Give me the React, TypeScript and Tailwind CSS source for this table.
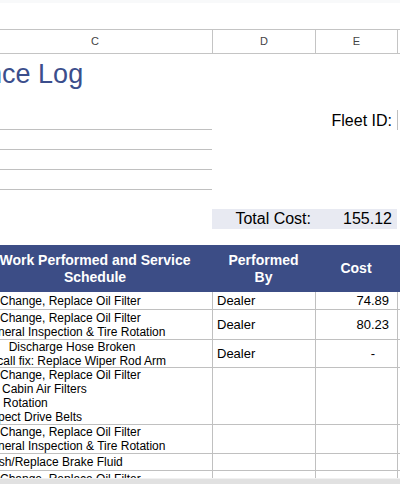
import React from "react";

interface LogLine {
  text: string;
  className?: string;
}

interface LogRow {
  height: string;
  lines: LogLine[];
  by: string;
  cost: string;
}

const oil: LogLine = { text: "Oil Change, Replace Oil Filter" };
const general: LogLine = { text: "General Inspection & Tire Rotation" };

const rows: LogRow[] = [
  { height: "h-[18px]", lines: [oil], by: "Dealer", cost: "74.89" },
  { height: "h-[30px]", lines: [oil, general], by: "Dealer", cost: "80.23" },
  {
    height: "h-[28px]",
    lines: [{ text: "AC\u00a0\u00a0 Discharge Hose Broken" }, { text: "Recall fix: Replace Wiper Rod Arm" }],
    by: "Dealer",
    cost: "-",
  },
  {
    height: "h-[57px]",
    lines: [
      oil,
      { text: "AC Cabin Air Filters" },
      { text: "Tire Rotation", className: "-ml-[2.5px]" },
      { text: "Inspect Drive Belts" },
    ],
    by: "",
    cost: "",
  },
  { height: "h-[29px]", lines: [oil, general], by: "", cost: "" },
  { height: "h-[17px]", lines: [{ text: "Flush/Replace Brake Fluid" }], by: "", cost: "" },
  { height: "h-[30px]", lines: [oil, general], by: "", cost: "" },
];

const App = () => {
  return (
    <div className="w-[400px] h-[484px] overflow-hidden bg-white flex flex-col font-['Liberation_Sans',Arial,sans-serif] text-black">
      <div className="h-[3px] bg-[#f8f9fa] shrink-0" />
      <div className="h-[26px] shrink-0" />

      <div className="flex-1 min-h-0 overflow-hidden">
        <div className="-ml-[22px] w-[440px] flex flex-col">
          {/* column letters */}
          <div className="flex h-[25px] border-y border-[#c4c4c4] text-[11px] text-[#444]">
            <div className="w-[234px] flex items-center justify-center">C</div>
            <div className="w-[103px] border-l border-[#c4c4c4] flex items-center justify-center">D</div>
            <div className="w-[82px] border-l border-[#c4c4c4] flex items-center justify-center">E</div>
            <div className="flex-1 border-l border-[#c4c4c4]" />
          </div>

          {/* title */}
          <div className="h-[56px] pt-[4px] whitespace-nowrap">
            <span className="inline-block -ml-[102px] text-[27px] leading-[32px] text-[#3b4e8c]">
              Maintenance Log
            </span>
          </div>

          {/* fleet id + blank lines */}
          <div className="flex h-[20px]">
            <div className="w-[234px] border-b border-[#c0c0c0]" />
            <div className="w-[103px]" />
            <div className="w-[82px] flex items-center justify-end pr-[5px] text-[16px] leading-[19px] whitespace-nowrap">
              Fleet ID:
            </div>
            <div className="flex-1 border-l border-[#c0c0c0]" />
          </div>
          <div className="flex h-[20px]">
            <div className="w-[234px] border-b border-[#c0c0c0]" />
          </div>
          <div className="flex h-[20px]">
            <div className="w-[234px] border-b border-[#c0c0c0]" />
          </div>
          <div className="flex h-[20px]">
            <div className="w-[234px] border-b border-[#c0c0c0]" />
          </div>
          <div className="h-[19px]" />

          {/* total */}
          <div className="flex h-[20px] text-[16px] leading-[20px]">
            <div className="w-[234px]" />
            <div className="w-[103px] bg-[#e8eaf2] text-right pr-[4px]">Total Cost:</div>
            <div className="w-[82px] bg-[#e8eaf2] text-right pr-[5px]">155.12</div>
          </div>
          <div className="h-[16px]" />

          {/* table header */}
          <div className="flex h-[47px] bg-[#3c4d86] text-white font-bold text-[14px] leading-[17px]">
            <div className="w-[234px] flex items-center justify-center text-center">
              Work Performed and Service
              <br />
              Schedule
            </div>
            <div className="w-[103px] flex items-center justify-center text-center">
              Performed
              <br />
              By
            </div>
            <div className="w-[82px] flex items-center justify-center">Cost</div>
            <div className="flex-1" />
          </div>

          {/* table rows */}
          {rows.map((row, i) => (
            <div key={i} className={`flex ${row.height} border-b border-[#c0c0c0] shrink-0`}>
              <div className="w-[234px] pl-[4px] flex flex-col justify-center text-[12px] leading-[14px] whitespace-pre">
                {row.lines.map((line, j) => (
                  <span key={j} className={line.className}>
                    {line.text}
                  </span>
                ))}
              </div>
              <div className="w-[103px] border-l border-[#c0c0c0] pl-[4px] flex items-center text-[13px]">
                {row.by}
              </div>
              <div
                className={
                  row.cost === "-"
                    ? "w-[82px] border-l border-[#c0c0c0] pr-[22px] flex items-center justify-end text-[13px]"
                    : "w-[82px] border-l border-[#c0c0c0] pr-[8px] flex items-center justify-end text-[13px]"
                }
              >
                {row.cost}
              </div>
              <div className="flex-1 border-l border-[#c0c0c0]" />
            </div>
          ))}
        </div>
      </div>

      <div className="h-[6px] shrink-0 bg-[#e1e1e1] border-t border-[#f1f1f1]" />
    </div>
  );
};

export default App;
